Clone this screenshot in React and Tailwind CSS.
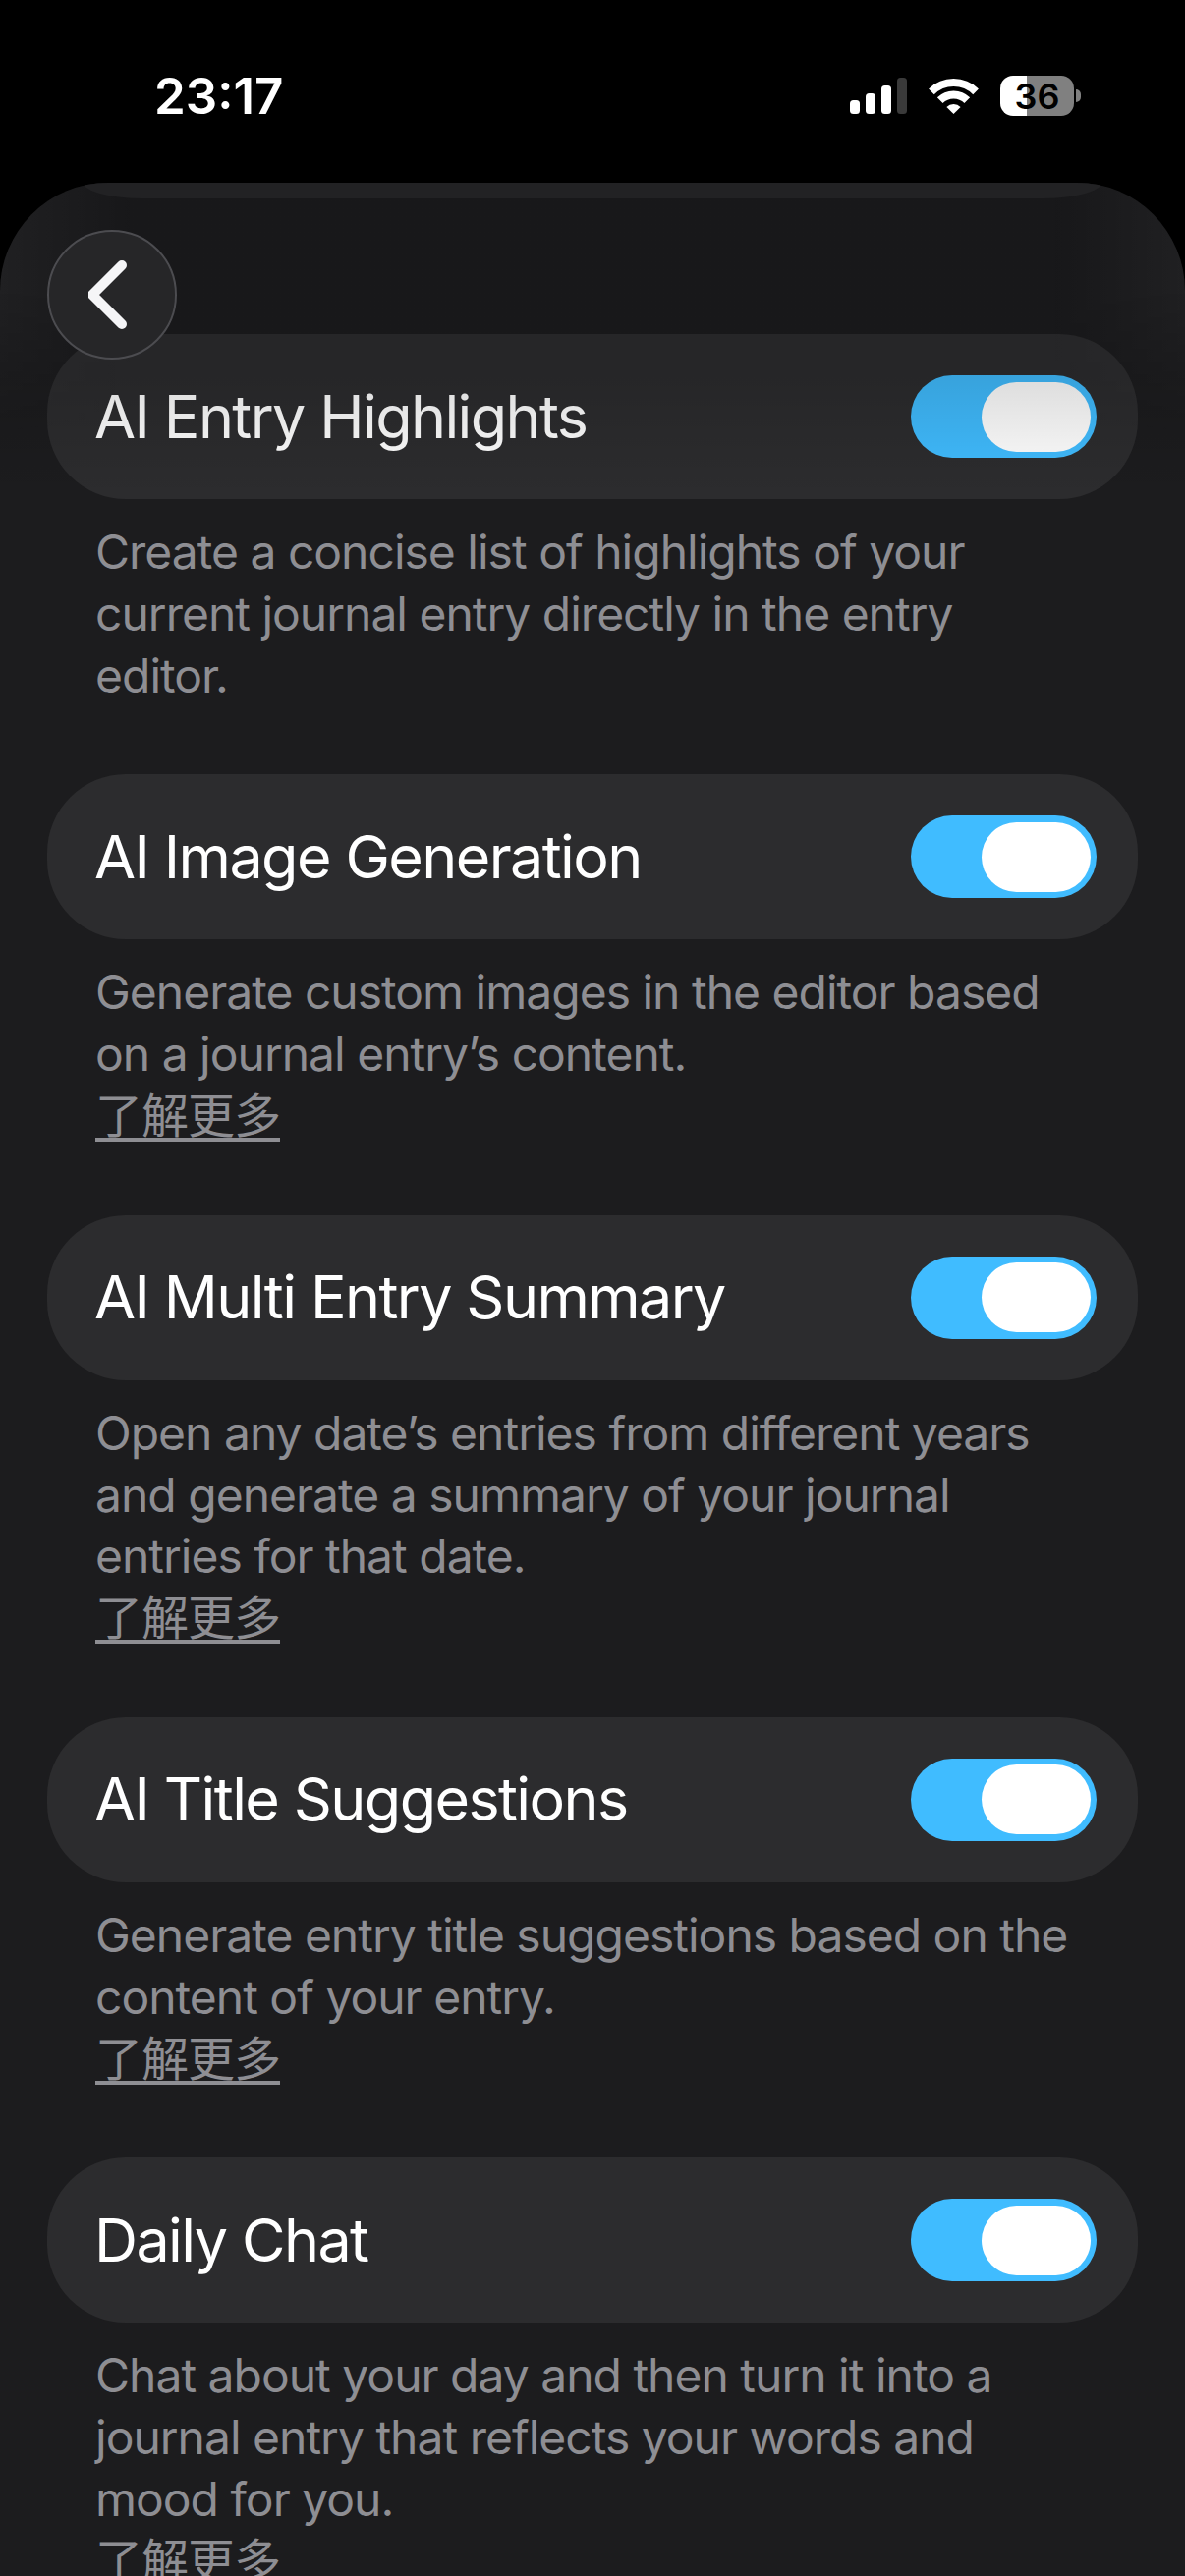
import React from "react";

const rows = [
  {
    title: "AI Entry Highlights",
    lines: [
      "Create a concise list of highlights of your",
      "current journal entry directly in the entry",
      "editor.",
    ],
  },
  {
    title: "AI Image Generation",
    lines: ["Generate custom images in the editor based", "on a journal entry’s content."],
    more: true,
  },
  {
    title: "AI Multi Entry Summary",
    lines: [
      "Open any date’s entries from different years",
      "and generate a summary of your journal",
      "entries for that date.",
    ],
    more: true,
  },
  {
    title: "AI Title Suggestions",
    lines: ["Generate entry title suggestions based on the", "content of your entry."],
    more: true,
  },
  {
    title: "Daily Chat",
    lines: [
      "Chat about your day and then turn it into a",
      "journal entry that reflects your words and",
      "mood for you.",
    ],
    more: true,
  },
];

const StatusIcons = () => (
  <div className="flex items-center">
    <svg width="58" height="37" viewBox="0 0 58 37" fill="none">
      <rect x="0" y="23" width="10" height="14" rx="3.5" fill="#fff" />
      <rect x="16" y="16" width="10" height="21" rx="3.5" fill="#fff" />
      <rect x="32" y="8" width="10" height="29" rx="3.5" fill="#fff" />
      <rect x="48" y="0" width="10" height="37" rx="3.5" fill="#3a3a3a" />
    </svg>
    <svg className="ml-[22px]" width="51" height="37" viewBox="0 0 51 37" fill="none">
      <path d="M2.9 14.4A32 32 0 0 1 48.1 14.4" stroke="#fff" strokeWidth="8" />
      <path d="M11.7 23.2A19.5 19.5 0 0 1 39.3 23.2" stroke="#fff" strokeWidth="8" />
      <path d="M25.5 37L18.4 29.9A10 10 0 0 1 32.6 29.9Z" fill="#fff" />
    </svg>
    <div className="ml-[22px] flex h-[41px] w-[75px] items-center justify-center rounded-[13px] bg-[linear-gradient(90deg,#fff_36%,#808080_36%)] text-[36px] leading-none font-semibold text-black">
      36
    </div>
    <div className="ml-[2px] h-[13px] w-[5px] rounded-r-full bg-[#808080]" />
  </div>
);

const Toggle = () => (
  <div className="flex h-[84px] w-[189px] shrink-0 items-center justify-end rounded-full bg-[#40bcff] pr-[6px]">
    <div className="h-[71px] w-[111px] rounded-full bg-white" />
  </div>
);

const Row = ({ title, lines, more }) => (
  <section className="mb-[69px]">
    <div className="flex h-[168px] items-center justify-between rounded-[80px] bg-[#2c2c2e] pr-[42px] pl-[48px]">
      <span className="text-[61px] leading-none font-[380] tracking-[-1.6px] text-white">{title}</span>
      <Toggle />
    </div>
    <div className="mt-[23px] px-[49px] text-[48px] leading-[62.8px] tracking-[-1px] text-[#8e8e93]">
      {lines.map((line) => (
        <p key={line} className="whitespace-nowrap">
          {line}
        </p>
      ))}
      {more && <a className="underline underline-offset-[5px]">了解更多</a>}
    </div>
  </section>
);

export default function App() {
  return (
    <div className="flex h-[2622px] flex-col overflow-hidden bg-black font-['Inter','Noto_Sans_CJK_SC',sans-serif]">
      <header className="flex h-[186px] shrink-0 items-start justify-between pt-[72px] pr-[106px] pl-[157px]">
        <span className="text-[51px] leading-[52px] font-semibold text-white">23:17</span>
        <div className="pt-[5px]">
          <StatusIcons />
        </div>
      </header>

      <main className="relative flex-1 overflow-hidden rounded-t-[110px] bg-[#1c1c1e] px-[48px] pt-[154px]">
        {rows.map((row) => (
          <Row key={row.title} {...row} />
        ))}

        {/* scroll edge dimming over the first row, lighter towards the sheet edges */}
        <div className="absolute inset-x-0 top-0 h-[320px] bg-[linear-gradient(180deg,rgba(0,0,0,0.14)_0%,rgba(0,0,0,0.14)_60%,rgba(0,0,0,0)_100%)]" />
        <div className="absolute inset-x-0 top-0 h-[260px] bg-[linear-gradient(90deg,rgba(255,255,255,0.035)_0px,rgba(255,255,255,0)_140px,rgba(255,255,255,0)_1066px,rgba(255,255,255,0.035)_100%)] [mask-image:linear-gradient(180deg,#000_40%,transparent)]" />
        <div className="absolute top-0 right-[85px] left-[85px] h-[16px] rounded-b-[60px_16px] bg-[#222224]" />

        <button className="absolute top-[48px] left-[48px] flex h-[132px] w-[132px] items-center justify-center rounded-full border-2 border-[#4c4c50] bg-[#262628]">
          <svg width="44" height="72" viewBox="0 0 44 72" fill="none" className="mr-[4px]">
            <path
              d="M34 6L4 36L34 66"
              stroke="#f5f5f7"
              strokeWidth="10"
              strokeLinecap="round"
              strokeLinejoin="round"
            />
          </svg>
        </button>
      </main>
    </div>
  );
}
